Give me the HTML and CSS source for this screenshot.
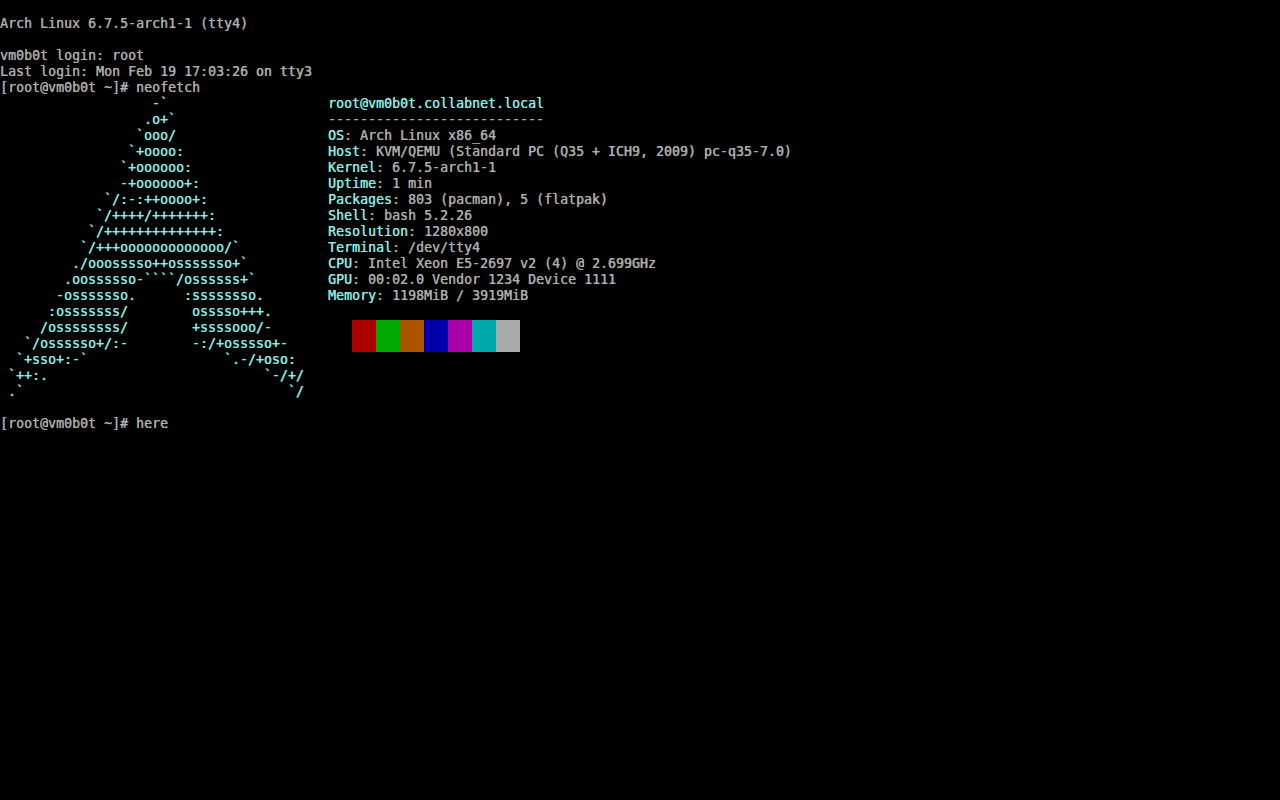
FILE: index.html
```html
<!DOCTYPE html>
<html lang="en">
<head>
<meta charset="utf-8">
<title>tty4</title>
<link rel="stylesheet" href="styles.css">
</head>
<body>
<main class="console">
<pre class="block">

Arch Linux 6.7.5-arch1-1 (tty4)

vm0b0t login: root
Last login: Mon Feb 19 17:03:26 on tty3
[root@vm0b0t ~]# neofetch</pre>
<section class="neofetch">
<pre class="block logo">                   -`
                  .o+`
                 `ooo/
                `+oooo:
               `+oooooo:
               -+oooooo+:
             `/:-:++oooo+:
            `/++++/+++++++:
           `/++++++++++++++:
          `/+++ooooooooooooo/`
         ./ooosssso++osssssso+`
        .oossssso-````/ossssss+`
       -osssssso.      :ssssssso.
      :osssssss/        osssso+++.
     /ossssssss/        +ssssooo/-
   `/ossssso+/:-        -:/+osssso+-
  `+sso+:-`                 `.-/+oso:
 `++:.                           `-/+/
 .`                                 `/</pre>
<div class="info">
<pre class="block"><span class="title">root@vm0b0t.collabnet.local</span>
---------------------------
<span class="key">OS</span>: Arch Linux x86_64
<span class="key">Host</span>: KVM/QEMU (Standard PC (Q35 + ICH9, 2009) pc-q35-7.0)
<span class="key">Kernel</span>: 6.7.5-arch1-1
<span class="key">Uptime</span>: 1 min
<span class="key">Packages</span>: 803 (pacman), 5 (flatpak)
<span class="key">Shell</span>: bash 5.2.26
<span class="key">Resolution</span>: 1280x800
<span class="key">Terminal</span>: /dev/tty4
<span class="key">CPU</span>: Intel Xeon E5-2697 v2 (4) @ 2.699GHz
<span class="key">GPU</span>: 00:02.0 Vendor 1234 Device 1111
<span class="key">Memory</span>: 1198MiB / 3919MiB</pre>
<div class="swatches">
<span class="swatch red"></span><span class="swatch green"></span><span class="swatch brown"></span><span class="swatch blue"></span><span class="swatch magenta"></span><span class="swatch cyan"></span><span class="swatch grey"></span>
</div>
</div>
</section>
<pre class="block prompt">[root@vm0b0t ~]# here</pre>
</main>
</body>
</html>
```
FILE: styles.css
```css
html, body {
  margin: 0;
  height: 100%;
  background: #000;
}

.console {
  width: 1280px;
  height: 800px;
  overflow: hidden;
  background: #000;
  color: #aeaeae;
  font-family: "DejaVu Sans Mono", "Liberation Mono", monospace;
  font-size: 13.29px;
  line-height: 16px;
  text-shadow: 0.35px 0 0 currentColor;
}

.block {
  margin: 0;
  font: inherit;
  white-space: pre;
}

.neofetch {
  display: flex;
}

.logo {
  flex: 0 0 328px;
  color: #86ece4;
}

.info {
  display: flex;
  flex-direction: column;
}

.title,
.key {
  color: #86ece4;
}

.swatches {
  display: flex;
  margin: 16px 0 0 24px;
}

.swatch {
  width: 24px;
  height: 32px;
}

.red { background: #aa0000; }
.green { background: #00aa00; }
.brown { background: #aa5500; }
.blue { background: #0000aa; }
.magenta { background: #aa00aa; }
.cyan { background: #00aaaa; }
.grey { background: #aaaaaa; }

.prompt {
  margin-top: 16px;
}
```
